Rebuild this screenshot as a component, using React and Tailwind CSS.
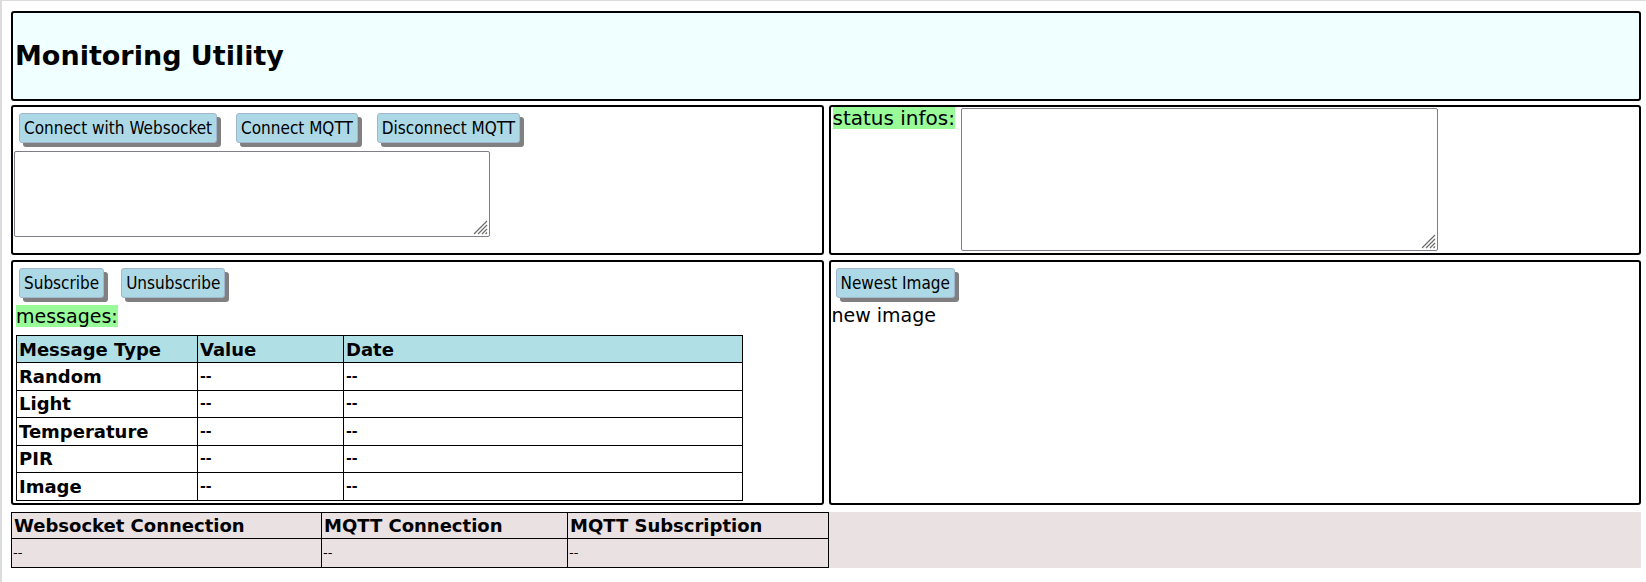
import React from "react";

const btn =
  "h-[30px] px-[4px] bg-[#add8e6] border border-[#a3b6cf] rounded-[3px] shadow-[4px_4px_0_#808080] text-[17px] leading-none text-black font-['DejaVu_Sans_Condensed','DejaVu_Sans',sans-serif] [font-stretch:condensed]";

const rows = ["Random", "Light", "Temperature", "PIR", "Image"];

// textarea with the bigger resize grip seen in the screenshot
function Area({ className }) {
  return (
    <div className={"relative " + className}>
      <textarea className="w-full h-full border border-[#7f7f8c] rounded-[2px] resize-none bg-white block" />
      <svg className="absolute right-[2px] bottom-[2px]" width="16" height="16" viewBox="0 0 16 16">
        <path d="M15 2 L2 15 M15 6 L6 15 M15 10 L10 15 M15 13.5 L13.5 15" stroke="#6b6b6b" strokeWidth="1.2" />
      </svg>
    </div>
  );
}

export default function App() {
  return (
    <div className="min-h-screen bg-white border-t border-l-2 border-[#dcdcdc] pt-[10px] pl-[9px] pr-[5px] font-['DejaVu_Sans',sans-serif] text-black">
      {/* header */}
      <div className="h-[90px] border-2 border-black rounded-[3px] bg-[#f0ffff] flex items-center pl-[2px]">
        <h2 className="text-[27px] font-bold">Monitoring Utility</h2>
      </div>

      {/* connect row */}
      <div className="grid grid-cols-2 gap-x-[5px] mt-[4px] h-[150px]">
        <div className="border-2 border-black rounded-[3px] flex flex-col">
          <div className="flex gap-x-[19px] pl-[6px] pt-[6px]">
            <button className={btn}>Connect with Websocket</button>
            <button className={btn}>Connect MQTT</button>
            <button className={btn}>Disconnect MQTT</button>
          </div>
          <Area className="mt-[8px] ml-[1px] w-[476px] h-[86px]" />
        </div>
        <div className="border-2 border-black rounded-[3px] flex items-start">
          <span className="ml-[2px] bg-[#98fb98] text-[20px] leading-[22px]">status infos:</span>
          <Area className="ml-[6px] mt-[1px] w-[477px] h-[143px]" />
        </div>
      </div>

      {/* messages row */}
      <div className="grid grid-cols-2 gap-x-[5px] mt-[5px] h-[245px]">
        <div className="border-2 border-black rounded-[3px] flex flex-col items-start pl-[3px]">
          <div className="flex gap-x-[17px] pl-[3px] pt-[6px]">
            <button className={btn}>Subscribe</button>
            <button className={btn}>Unsubscribe</button>
          </div>
          <span className="mt-[7px] bg-[#98fb98] text-[19px] leading-[22px]">messages:</span>
          <table className="mt-[8px] w-[727px] border-collapse border border-black text-[18px]">
            <thead>
              <tr className="bg-[#b0e0e6] h-[27px]">
                <th className="w-[181px] border border-black text-left pl-[2px] font-bold leading-[21px]">Message Type</th>
                <th className="w-[146px] border border-black text-left pl-[2px] font-bold leading-[21px]">Value</th>
                <th className="border border-black text-left pl-[2px] font-bold leading-[21px]">Date</th>
              </tr>
            </thead>
            <tbody>
              {rows.map((r) => (
                <tr key={r} className="h-[27.5px]">
                  <td className="border border-black pl-[2px] font-bold leading-[21px]">{r}</td>
                  <td className="border border-black pl-[2px] text-[14px] font-bold">--</td>
                  <td className="border border-black pl-[2px] text-[14px] font-bold">--</td>
                </tr>
              ))}
            </tbody>
          </table>
        </div>
        <div className="border-2 border-black rounded-[3px] flex flex-col items-start">
          <div className="pl-[5px] pt-[6px]">
            <button className={btn}>Newest Image</button>
          </div>
          <span className="mt-[6px] ml-[1px] text-[19px] leading-[22px]">new image</span>
        </div>
      </div>

      {/* status footer */}
      <div className="mt-[7px] bg-[#eae1e3] h-[56px]">
        <table className="w-[818px] border-collapse border border-black">
          <thead>
            <tr className="h-[26px]">
              <th className="w-[310px] border border-black text-left pl-[2px] text-[18px] font-bold leading-[21px]">Websocket Connection</th>
              <th className="w-[246px] border border-black text-left pl-[2px] text-[18px] font-bold leading-[21px]">MQTT Connection</th>
              <th className="border border-black text-left pl-[2px] text-[18px] font-bold leading-[21px]">MQTT Subscription</th>
            </tr>
          </thead>
          <tbody>
            <tr className="h-[29px]">
              <td className="border border-black text-[13px] pl-px">--</td>
              <td className="border border-black text-[13px] pl-px">--</td>
              <td className="border border-black text-[13px] pl-px">--</td>
            </tr>
          </tbody>
        </table>
      </div>
    </div>
  );
}
